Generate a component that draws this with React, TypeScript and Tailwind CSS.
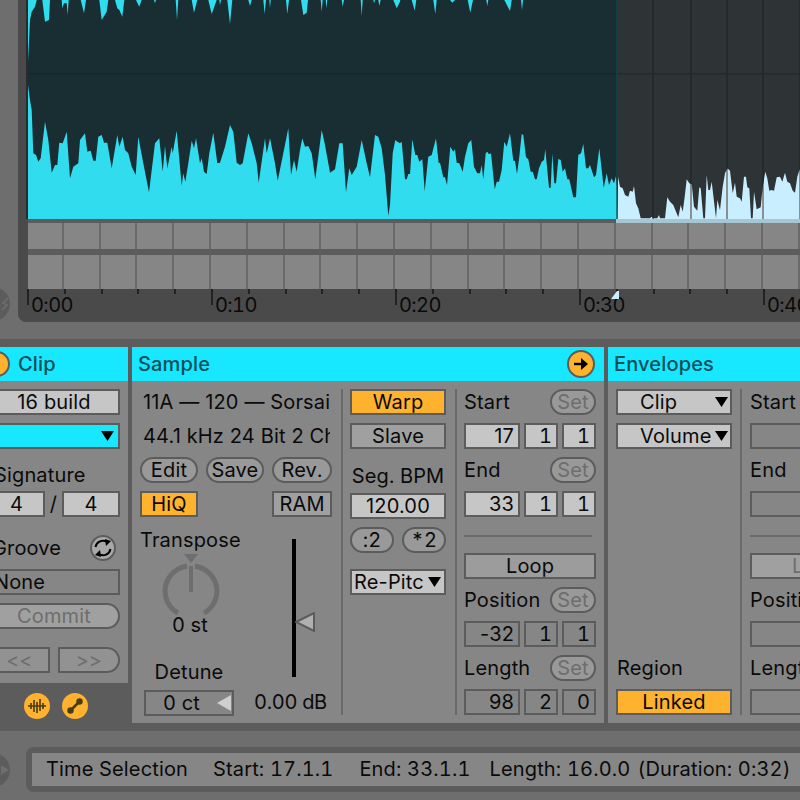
import React from 'react';

const lowerA: number[][] = [[84,-105],[90,-60],[95,-30],[100,100],[108,105],[115,125],[122,115],[135,5],[145,60],[155,158],[165,135],[172,135],[178,68],[188,70],[200,35],[210,175],[220,140],[235,130],[240,60],[255,40],[262,95],[272,92],[280,122],[287,122],[295,50],[305,45],[312,68],[322,68],[335,145],[352,45],[358,80],[368,50],[375,90],[385,100],[395,140],[407,165],[415,50],[430,130],[447,217],[465,70],[478,55],[488,155],[495,78],[502,145],[515,80],[518,100],[530,32],[545,197],[550,160],[556,185],[565,130],[575,62],[582,85],[588,55],[600,130],[605,115],[612,155],[620,162],[628,100],[640,38],[652,130],[660,128],[675,80],[690,15],[700,35],[710,128],[720,135],[728,130],[745,40],[755,70],[770,130],[776,188],[795,55],[800,100],[810,55],[825,130],[833,182],[850,100],[865,25],[873,165],[882,120],[890,155],[900,90],[907,55],[915,80],[925,78],[935,100],[946,178],[965,30],[975,75],[990,158],[1005,148],[1018,70],[1028,70],[1038,217],[1048,145],[1055,165],[1070,140],[1085,60],[1100,130],[1110,172],[1125,45],[1135,50],[1145,85],[1155,165],[1165,287],[1170,255]];
const lowerB: number[][] = [[8,100],[16,60],[22,65],[30,70],[35,65],[45,178],[50,178],[55,162],[60,162],[67,58],[76,105],[82,105],[88,125],[97,118],[104,213],[115,110],[125,105],[138,55],[146,130],[150,128],[160,172],[165,172],[171,195],[181,80],[190,95],[195,88],[200,128],[208,130],[218,155],[225,110],[235,70],[244,60],[252,140],[262,160],[270,160],[275,135],[280,178],[287,100],[292,95],[297,103],[303,100],[314,208],[320,185],[327,185],[335,150],[343,65],[350,80],[360,40],[370,122],[375,122],[381,162],[388,110],[395,42],[400,45],[408,112],[415,118],[422,155],[428,155],[435,178],[440,178],[447,145],[455,125],[462,120],[466,88],[477,203],[482,203],[487,100],[493,190],[498,190],[505,117],[512,120],[518,155],[525,145],[532,178],[538,178],[550,232],[558,232],[565,105],[573,100],[580,72],[588,145],[595,145],[600,135],[612,172],[618,165],[628,85],[641,203],[650,160],[657,195],[665,175],[672,190],[678,168],[681,200]];
const topA: number[][] = [[84,185],[90,60],[95,35],[105,20],[110,0],[127,0],[135,65],[147,60],[150,0],[185,0],[187,25],[192,10],[200,10],[203,45],[206,0],[242,0],[252,40],[258,0],[298,0],[305,60],[320,35],[325,0],[345,0],[352,25],[358,30],[367,50],[373,0],[408,0],[418,20],[425,0],[462,0],[465,10],[468,0],[527,0],[531,60],[535,0],[575,0],[582,38],[592,0],[625,0],[635,42],[650,0],[658,0],[660,15],[663,0],[682,0],[690,72],[697,0],[745,0],[750,18],[755,0],[790,0],[794,42],[798,0],[808,0],[810,25],[812,0],[858,0],[862,42],[867,0]];
const topB: number[][] = [[33,0],[40,45],[50,38],[54,0],[92,0],[95,35],[98,0],[107,0],[109,25],[112,0],[155,0],[158,20],[162,0],[212,0],[215,48],[218,0],[250,0],[252,10],[255,0],[265,0],[268,18],[272,0],[310,0],[320,25],[330,5],[331,0],[365,0],[374,32],[379,0],[430,0],[436,42],[440,0],[480,0],[487,8],[495,0],[533,0],[541,38],[549,0],[589,0],[592,18],[595,0],[643,0],[660,33],[665,0],[693,0],[696,30],[699,0]];
const lowerC: number[][] = [[24,530],[30,560],[38,565],[45,585],[55,590],[60,572],[68,575],[72,558],[78,610],[85,625],[92,655],[120,655],[125,650],[130,655],[142,655],[147,645],[150,655],[165,655],[172,592],[180,605],[190,615],[205,652],[212,615],[218,635],[224,590],[230,538],[238,550],[245,552],[252,620],[262,632],[268,562],[272,565],[280,655],[285,655],[290,525],[295,570],[300,570],[305,545],[318,655],[322,600],[330,630],[338,560],[345,520],[352,505],[360,512],[368,580],[375,548],[380,590],[390,595],[395,605],[402,530],[408,530],[412,562],[418,565],[423,655],[428,655],[432,575],[440,628],[452,622],[458,560],[466,515],[472,535],[478,572],[485,570],[492,572],[500,532],[510,530],[517,545],[525,518],[532,545],[540,550],[548,572],[555,578],[562,530],[570,505]];

const pts = (list: number[][], fx: (x: number) => number, fy: (y: number) => number) =>
  list.map(([x, y]) => `${fx(x).toFixed(1)},${fy(y).toFixed(1)}`).join(' ');

const lowerPoints = [
  pts(lowerA, (x) => x / 3, (y) => 120 + y / 3),
  pts(lowerB, (x) => 390 + x / 3, (y) => 120 + y / 3),
].join(' ');
const topPoints = [
  pts(topA, (x) => x / 3, (y) => y / 3),
  pts(topB, (x) => 290 + x / 3, (y) => y / 3),
].join(' ');
const darkPoints = pts(lowerC, (x) => 610 + x / 3, (y) => y / 3);
const darkShape = `618,0 618,176 ${darkPoints} 800,168 800,0`;

const cells = Array.from({ length: 21 }, (_, i) => i);
const gridX = [653, 691, 727, 763, 800];

function Waveform() {
  return (
    <svg className="block h-[219px] w-[772px] shrink-0" viewBox="28 0 772 219">
      <defs>
        <clipPath id="right-dark">
          <polygon points={darkShape} />
        </clipPath>
      </defs>
      <rect x="28" y="0" width="590" height="219" fill="#182e33" />
      <polygon points={`28,219 ${lowerPoints} 618,219`} fill="#30dcee" />
      <polygon points={`28,0 ${topPoints} 618,0`} fill="#30dcee" />
      <rect x="28" y="73" width="590" height="1.5" fill="#14282c" />
      <rect x="618" y="0" width="182" height="219" fill="#c8eeff" />
      {gridX.map((x) => (
        <rect key={x} x={x - 1} y="0" width="2" height="219" fill="#8a9092" />
      ))}
      <polygon points={darkShape} fill="#2e3336" />
      <g clipPath="url(#right-dark)">
        {gridX.map((x) => (
          <rect key={x} x={x - 1} y="0" width="2" height="219" fill="#24292b" />
        ))}
        <rect x="618" y="73" width="182" height="1.5" fill="#24292b" />
      </g>
      <rect x="616" y="0" width="2" height="219" fill="#0a4a50" fillOpacity="0.65" />
    </svg>
  );
}

function Strip({ height }: { height: string }) {
  return (
    <div className={`flex bg-[#868686] ${height}`}>
      {cells.map((i) => (
        <div
          key={i}
          className={
            i === 0
              ? 'h-full w-[35.8px] shrink-0 border-r-2 border-[#6a6a6a]'
              : 'h-full w-[36.8px] shrink-0 border-r-2 border-[#6a6a6a]'
          }
        />
      ))}
    </div>
  );
}

function Ruler() {
  return (
    <div className="flex h-[33px] pl-[1px] text-[#0a0a0a]">
      {cells.map((i) => {
        const major = i % 5 === 0;
        return (
          <div key={i} className="relative h-full w-[36.8px] shrink-0">
            <div className={major ? 'h-[16px] w-[2px] bg-[#222222]' : 'h-[5px] w-[2px] bg-[#222222]'} />
            {major && (
              <span className="absolute left-[4px] top-[5px] whitespace-nowrap leading-[22px] tracking-[-0.6px]">{`0:${String(i * 2).padStart(2, '0')}`}</span>
            )}
            {i === 16 && (
              <svg className="absolute left-[-5px] top-[2px] h-[8px] w-[8px]" viewBox="0 0 8 8">
                <polygon points="0,8 6,0 8,0 8,8" fill="#c8eeff" />
              </svg>
            )}
          </div>
        );
      })}
    </div>
  );
}

function Box({ className = '', children }: { className?: string; children?: React.ReactNode }) {
  return (
    <div className={`flex h-[26px] shrink-0 items-center whitespace-nowrap border-2 border-[#5c5c5c] ${className}`}>
      {children}
    </div>
  );
}

function Arrow() {
  return (
    <svg className="h-[10px] w-[13px] shrink-0" viewBox="0 0 13 10">
      <polygon points="0,0 13,0 6.5,10" fill="#000000" />
    </svg>
  );
}

function Label({ className = '', children }: { className?: string; children: React.ReactNode }) {
  return <div className={`flex h-[26px] shrink-0 items-center whitespace-nowrap ${className}`}>{children}</div>;
}

function SetRow({ label, top, hidden }: { label: string; top: string; hidden?: boolean }) {
  return (
    <div className={`flex h-[26px] shrink-0 items-center justify-between ${top}`}>
      <span>{label}</span>
      {!hidden && (
        <Box className="w-[46px] justify-center rounded-full bg-[#999999] text-[#6e6e6e]">Set</Box>
      )}
    </div>
  );
}

function Triple({ values, bg, top }: { values: string[]; bg: string; top: string }) {
  return (
    <div className={`flex gap-[4px] ${top}`}>
      <Box className={`w-[56px] justify-end pr-[4px] normal-nums ${bg}`}>{values[0]}</Box>
      <Box className={`w-[34px] justify-end pr-[4px] ${bg}`}>{values[1]}</Box>
      <Box className={`w-[34px] justify-end pr-[4px] ${bg}`}>{values[2]}</Box>
    </div>
  );
}

function RegionColumn({ empty }: { empty?: boolean }) {
  const v = (a: string, b: string, c: string) => (empty ? ['', '', ''] : [a, b, c]);
  return (
    <div className="flex w-[132px] shrink-0 flex-col">
      <SetRow label="Start" top="" hidden={empty} />
      <Triple values={v('17', '1', '1')} bg={empty ? '' : 'bg-[#c6c6c6]'} top="mt-2" />
      <SetRow label="End" top="mt-2" hidden={empty} />
      <Triple values={v('33', '1', '1')} bg={empty ? '' : 'bg-[#c6c6c6]'} top="mt-2" />
      <div className="mt-[18px] h-[2px] w-[128px] bg-[#6a6a6a]" />
      <Box className={`mt-4 justify-center ${empty ? 'bg-[#a0a0a0] text-[#6e6e6e]' : 'bg-[#9c9c9c]'}`}>Loop</Box>
      <SetRow label="Position" top="mt-2" hidden={empty} />
      <Triple values={v('-32', '1', '1')} bg="" top="mt-2" />
      <SetRow label="Length" top="mt-2" hidden={empty} />
      <Triple values={v('98', '2', '0')} bg="" top="mt-2" />
    </div>
  );
}

function ClipPanel() {
  return (
    <div className="flex w-[128px] shrink-0 flex-col">
      <div className="h-[336px] overflow-hidden bg-[#868686]">
        <div className="flex h-[34px] items-center bg-[#18e8ff] font-medium text-[#0b4f5c]">
          <div className="ml-[-16px] mr-[8px] h-[26px] w-[26px] rounded-full border-2 border-[#5c5c5c] bg-[#ffb22e]" />
          Clip
        </div>
        <div className="ml-[-12px] flex w-[132px] flex-col pt-2">
          <Box className="justify-center bg-[#c6c6c6] normal-nums">16 build</Box>
          <Box className="mt-2 justify-end bg-[#18e8ff] pr-[4px]">
            <Arrow />
          </Box>
          <Label className="mt-[13px] pl-[6px]">Signature</Label>
          <div className="mt-[3px] flex items-center">
            <Box className="w-[57px] justify-center bg-[#c6c6c6]">4</Box>
            <span className="w-[17px] text-center">/</span>
            <Box className="w-[58px] justify-center bg-[#c6c6c6]">4</Box>
          </div>
          <div className="mt-[18px] flex h-[25px] items-center justify-between pl-[4px] pr-[4px]">
            <span>Groove</span>
            <svg className="h-[26px] w-[26px]" viewBox="0 0 26 26">
              <circle cx="13" cy="13" r="12" fill="#a8a8a8" stroke="#5c5c5c" strokeWidth="2" />
              <path d="M5.5 12 A7.5 7.5 0 0 1 17 7" fill="none" stroke="#000000" strokeWidth="2" />
              <path d="M20.5 14 A7.5 7.5 0 0 1 9 19" fill="none" stroke="#000000" strokeWidth="2" />
              <polygon points="15,4 21,6 16,11" fill="#000000" />
              <polygon points="11,22 5,20 10,15" fill="#000000" />
            </svg>
          </div>
          <Box className="mt-[9px] pl-[4px]">None</Box>
          <Box className="mt-2 justify-center rounded-r-full bg-[#a0a0a0] text-[#6e6e6e]">Commit</Box>
          <div className="mt-[18px] flex gap-2">
            <Box className="w-[62px] justify-center bg-[#929292] text-[#6e6e6e]">&lt;&lt;</Box>
            <Box className="w-[62px] justify-center rounded-r-full bg-[#929292] text-[#6e6e6e]">&gt;&gt;</Box>
          </div>
        </div>
      </div>
      <div className="mt-[10px] flex gap-3 pl-[24px]">
        <svg className="h-[26px] w-[26px]" viewBox="0 0 26 26">
          <circle cx="13" cy="13" r="13" fill="#ffb22e" />
          <path d="M4 13 H22 M7 10 V16 M10 7 V19 M13 9 V20 M16 6 V18 M19 10 V16" stroke="#4a3a10" strokeWidth="1.6" />
        </svg>
        <svg className="h-[26px] w-[26px]" viewBox="0 0 26 26">
          <circle cx="13" cy="13" r="13" fill="#ffb22e" />
          <path d="M9 17 L17 9" stroke="#4a3a10" strokeWidth="2.5" />
          <circle cx="8.5" cy="17.5" r="3.2" fill="#4a3a10" />
          <circle cx="17.5" cy="8.5" r="3.2" fill="#4a3a10" />
        </svg>
      </div>
    </div>
  );
}

function SamplePanel() {
  return (
    <div className="h-[376px] w-[472px] shrink-0 bg-[#868686]">
      <div className="flex h-[34px] items-center justify-between bg-[#18e8ff] pl-[6px] pr-[9px] font-medium text-[#0b4f5c]">
        Sample
        <svg className="h-[28px] w-[28px]" viewBox="0 0 28 28">
          <circle cx="14" cy="14" r="13" fill="#ffb22e" stroke="#5c5c5c" strokeWidth="2" />
          <path d="M7 14 H15" stroke="#000000" strokeWidth="2.4" />
          <polygon points="14,8 21,14 14,20" fill="#000000" />
        </svg>
      </div>
      <div className="flex items-start pt-2">
        <div className="flex w-[209px] shrink-0 flex-col pl-2">
          <Label className="ml-[3px] w-[187px] overflow-hidden normal-nums">11A — 120 — Sorsai</Label>
          <Label className="ml-[3px] mt-2 w-[187px] overflow-hidden normal-nums">44.1 kHz 24 Bit 2 Ch</Label>
          <div className="mt-2 flex gap-2">
            <Box className="w-[58px] justify-center rounded-full bg-[#999999]">Edit</Box>
            <Box className="w-[58px] justify-center rounded-full bg-[#999999]">Save</Box>
            <Box className="w-[60px] justify-center rounded-full bg-[#999999]">Rev.</Box>
          </div>
          <div className="mt-2 flex justify-between pr-[9px]">
            <Box className="w-[58px] justify-center bg-[#ffb22e]">HiQ</Box>
            <Box className="w-[60px] justify-center bg-[#a0a0a0]">RAM</Box>
          </div>
          <div className="mt-[10px] flex">
            <div className="flex w-[104px] shrink-0 flex-col">
              <Label className="h-[25px]">Transpose</Label>
              <svg className="ml-[21px] h-[62px] w-[60px]" viewBox="0 0 60 62">
                <path d="M17 60 A25 25 0 0 1 26 13.3" fill="none" stroke="#6e6e6e" strokeWidth="5" />
                <path d="M34 13.3 A25 25 0 0 1 43 60" fill="none" stroke="#6e6e6e" strokeWidth="5" />
                <path d="M30 13 V39" stroke="#6e6e6e" strokeWidth="4" />
                <polygon points="23,1 37,1 30,10" fill="#6e6e6e" />
              </svg>
              <div className="h-[20px] w-[100px] text-center leading-[20px]">0 st</div>
              <Label className="mt-[24px] w-[98px] justify-center">Detune</Label>
              <Box className="ml-[4px] mt-[5px] w-[90px]">
                <span className="flex-1 text-center">0 ct</span>
                <svg className="mr-[1px] h-[16px] w-[14px] shrink-0" viewBox="0 0 14 16">
                  <polygon points="0,8 14,0 14,16" fill="#cfcfcf" />
                </svg>
              </Box>
            </div>
            <div className="flex flex-col pt-[12px]">
              <div className="relative ml-[48px] h-[138px] w-[4px] bg-black">
                <svg className="absolute left-[3px] top-[73px] h-[20px] w-[20px]" viewBox="0 0 20 20">
                  <polygon points="1,10 19,1 19,19" fill="#b0b0b0" stroke="#5c5c5c" strokeWidth="2" />
                </svg>
              </div>
              <Label className="mt-[12px] pl-[10px] tracking-[-0.3px]">0.00 dB</Label>
            </div>
          </div>
        </div>
        <div className="h-[326px] w-[2px] shrink-0 bg-[#6a6a6a]" />
        <div className="ml-[7px] flex w-[96px] shrink-0 flex-col">
          <Box className="justify-center bg-[#ffb22e]">Warp</Box>
          <Box className="mt-2 justify-center bg-[#a0a0a0]">Slave</Box>
          <Label className="mt-[14px] justify-center">Seg. BPM</Label>
          <Box className="mt-[4px] justify-center bg-[#c6c6c6] normal-nums">120.00</Box>
          <div className="mt-2 flex gap-2">
            <Box className="w-[44px] justify-center rounded-full bg-[#999999]">:2</Box>
            <Box className="w-[44px] justify-center rounded-full bg-[#999999]">*2</Box>
          </div>
          <Box className="mt-4 justify-between overflow-hidden bg-[#c6c6c6] pl-[2px] pr-[3px] normal-nums">
            Re-Pitc
            <Arrow />
          </Box>
        </div>
        <div className="ml-[9px] h-[326px] w-[2px] shrink-0 bg-[#6a6a6a]" />
        <div className="ml-[7px]">
          <RegionColumn />
        </div>
      </div>
    </div>
  );
}

function EnvelopesPanel() {
  return (
    <div className="h-[376px] flex-1 overflow-hidden bg-[#868686]">
      <div className="flex h-[34px] items-center bg-[#18e8ff] pl-[6px] font-medium text-[#0b4f5c]">Envelopes</div>
      <div className="flex items-start pl-2 pt-2">
        <div className="flex h-[326px] w-[116px] shrink-0 flex-col">
          <Box className="bg-[#c6c6c6] pl-[22px] pr-[2px]">
            <span className="flex-1">Clip</span>
            <Arrow />
          </Box>
          <Box className="mt-2 bg-[#c6c6c6] pl-[22px] pr-[2px]">
            <span className="flex-1">Volume</span>
            <Arrow />
          </Box>
          <Label className="mt-auto pl-[1px]">Region</Label>
          <Box className="mt-2 justify-center bg-[#ffb22e]">Linked</Box>
        </div>
        <div className="ml-2 h-[326px] w-[2px] shrink-0 bg-[#6a6a6a]" />
        <div className="ml-2">
          <RegionColumn empty />
        </div>
      </div>
    </div>
  );
}

function SideDot({ top }: { top?: boolean }) {
  return (
    <div className="ml-[-24px] flex h-[34px] w-[34px] shrink-0 items-center justify-end rounded-full bg-[#5c5c5c] pr-[1px]">
      <svg className="h-[14px] w-[8px]" viewBox="0 0 8 14">
        {top ? (
          <path d="M7 1 L2 6 L6 8 L1 13" fill="none" stroke="#6e6e6e" strokeWidth="1.6" />
        ) : (
          <polygon points="0,2 8,7 0,12" fill="#6e6e6e" />
        )}
      </svg>
    </div>
  );
}

export default function App() {
  return (
    <div className="flex h-[800px] w-[800px] flex-col overflow-hidden bg-[#6e6e6e] font-['Inter','Liberation_Sans',sans-serif] text-[20px] leading-none tracking-[0.15px] text-[#0a0a0a] tabular-nums">
      <div className="flex h-[322px] shrink-0">
        <div className="flex w-[18px] shrink-0 items-end pb-[1px]">
          <SideDot top />
        </div>
        <div className="flex min-w-0 flex-1 flex-col overflow-hidden rounded-bl-lg bg-[#4a4a4a] pl-[8px]">
          <div className="flex">
            <div className="w-[2px] shrink-0 bg-[#2b2b2b]" />
            <Waveform />
          </div>
          <div className="ml-[2px] flex h-[4px] shrink-0 bg-[#5c5c5c]">
            <div className="w-[588px] shrink-0" />
            <div className="flex-1 bg-[#a6c6d4]" />
          </div>
          <div className="ml-[2px]">
            <Strip height="h-[26px]" />
          </div>
          <div className="ml-[2px] h-[6px] shrink-0 bg-[#5c5c5c]" />
          <div className="ml-[2px]">
            <Strip height="h-[34px]" />
          </div>
          <Ruler />
        </div>
      </div>
      <div className="mt-[17px] flex h-[392px] shrink-0 items-start gap-[4px] bg-[#5c5c5c] pt-2">
        <ClipPanel />
        <SamplePanel />
        <EnvelopesPanel />
      </div>
      <div className="mt-4 flex h-[45px] shrink-0 items-center">
        <div className="flex w-[26px] shrink-0 items-center">
          <SideDot />
        </div>
        <div className="h-full flex-1 rounded-l-lg bg-[#5c5c5c] py-[6px] pl-[6px]">
          <div className="flex h-full items-center whitespace-nowrap bg-[#868686] pb-[2px] pl-[14px]">
            <span>Time Selection</span>
            <span className="ml-[25px]">Start: 17.1.1</span>
            <span className="ml-[26px]">End: 33.1.1</span>
            <span className="ml-[19px]">Length: 16.0.0</span>
            <span className="ml-[7px]">(Duration: 0:32)</span>
          </div>
        </div>
      </div>
    </div>
  );
}
